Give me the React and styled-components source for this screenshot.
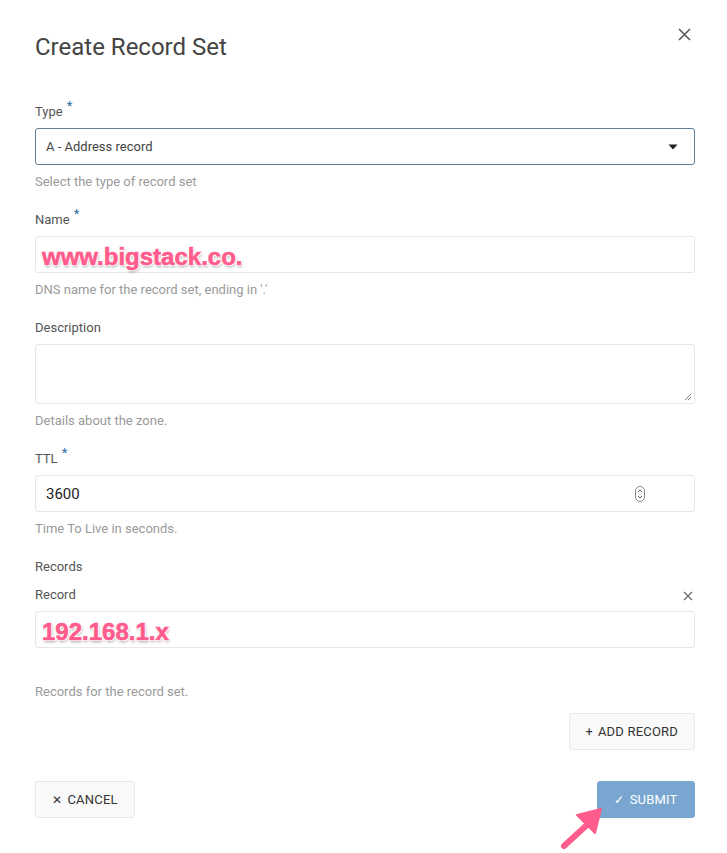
import styled, { createGlobalStyle } from "styled-components";

const Global = createGlobalStyle`
  html, body {
    margin: 0;
    background: #fff;
  }
  body {
    font-family: Roboto, "Liberation Sans", Arial, sans-serif;
    color: #444;
  }
`;

const Field = ({ label, required, help, children }) => (
  <FieldBox>
    <Label>
      {label}
      {required && <Star>*</Star>}
    </Label>
    {children}
    {help && <Help>{help}</Help>}
  </FieldBox>
);

const App = () => {
  return (
    <Dialog>
      <Global />
      <Header>
        <Title>Create Record Set</Title>
        <CloseBtn aria-label="close">
          <svg width="13" height="13" viewBox="0 0 13 13">
            <path d="M1 1L12 12M12 1L1 12" stroke="#555" strokeWidth="1.5" />
          </svg>
        </CloseBtn>
      </Header>

      <Field label="Type" required help="Select the type of record set">
        <Control $focused>
          <Value>A - Address record</Value>
          <svg width="10" height="6" viewBox="0 0 10 6">
            <path d="M0.5 0.5H9.5L5 5.5Z" fill="#222" />
          </svg>
        </Control>
      </Field>

      <Field label="Name" required help="DNS name for the record set, ending in '.'">
        <Control>
          <Annotated>www.bigstack.co.</Annotated>
        </Control>
      </Field>

      <Field label="Description" help="Details about the zone.">
        <Area>
          <svg width="8" height="8" viewBox="0 0 8 8">
            <path d="M7 1L1 7M7 4L4 7" stroke="#777" strokeWidth="0.9" />
          </svg>
        </Area>
      </Field>

      <Field label="TTL" required help="Time To Live in seconds.">
        <Control>
          <Number>3600</Number>
          <Spinner>
            <svg width="10" height="16" viewBox="0 0 10 16">
              <rect x="0.5" y="0.5" width="9" height="15" rx="4.5" fill="none" stroke="#888" />
              <path d="M3 6L5 4L7 6M3 10L5 12L7 10" fill="none" stroke="#555" strokeWidth="1" />
            </svg>
          </Spinner>
        </Control>
      </Field>

      <Section>Records</Section>
      <RecordHead>
        <Label>Record</Label>
        <svg width="10" height="10" viewBox="0 0 10 10">
          <path d="M1 1L9 9M9 1L1 9" stroke="#666" strokeWidth="1.2" />
        </svg>
      </RecordHead>
      <Control>
        <Annotated>192.168.1.x</Annotated>
      </Control>
      <Help $wide>Records for the record set.</Help>

      <AddRow>
        <Button>
          <span>+</span> ADD RECORD
        </Button>
      </AddRow>

      <Footer>
        <Button>
          <span>✕</span> CANCEL
        </Button>
        <Button $primary>
          <span>✓</span> SUBMIT
        </Button>
        <Arrow width="50" height="50" viewBox="0 0 50 50">
          <path d="M4 44L28 22" stroke="#ff5b8c" strokeWidth="6" strokeLinecap="round" />
          <path d="M17 13L41 7L35 31Z" fill="#ff5b8c" strokeLinejoin="round" stroke="#ff5b8c" strokeWidth="2" />
        </Arrow>
      </Footer>
    </Dialog>
  );
};

export default App;

const Dialog = styled.div`
  position: relative;
  width: 727px;
  height: 853px;
  box-sizing: border-box;
  padding: 33px 32px 0 35px;
`;

const Header = styled.div`
  display: flex;
  justify-content: space-between;
  align-items: flex-start;
  margin-bottom: 42px;
`;

const Title = styled.h2`
  margin: 0;
  font-size: 24px;
  line-height: 28px;
  font-weight: 400;
  color: #444;
`;

const CloseBtn = styled.button`
  border: none;
  background: none;
  padding: 0;
  margin: -5px 4px 0 0;
  cursor: pointer;
`;

const FieldBox = styled.div`
  display: flex;
  flex-direction: column;
  margin-bottom: 22px;
`;

const Label = styled.div`
  font-size: 13px;
  line-height: 16px;
  color: #555;
  margin-bottom: 9px;
  position: relative;
  top: 1px;
`;

const Star = styled.span`
  color: #2d6da3;
  font-size: 13px;
  position: relative;
  top: -6px;
  margin-left: 4px;
`;

const Help = styled.div`
  font-size: 13px;
  line-height: 16px;
  color: #9a9a9a;
  margin-top: ${(p) => (p.$wide ? "35px" : "8px")};
  position: relative;
  top: 1px;
`;

const Control = styled.div`
  height: 37px;
  box-sizing: border-box;
  display: flex;
  align-items: center;
  justify-content: space-between;
  padding: 0 16px 0 10px;
  border: 1px solid ${(p) => (p.$focused ? "#5f7f9b" : "#e6e6e6")};
  border-radius: 3px;
  background: #fff;
`;

const Value = styled.span`
  font-size: 13px;
  color: #444;
`;

const Number = styled.span`
  font-size: 15px;
  color: #222;
`;

const Spinner = styled.span`
  display: flex;
  margin-right: 33px;
`;

const Annotated = styled.span`
  font-family: "Liberation Sans", Arial, sans-serif;
  font-weight: 700;
  font-size: 24px;
  color: #ff5b8c;
  margin-left: -4px;
  margin-top: 4px;
  -webkit-text-stroke: 0.6px #ff5b8c;
  text-shadow: -1px -1px 0 #fff, 1px -1px 0 #fff, -1px 1px 0 #fff, 1px 1px 0 #fff,
    1px 2px 3px rgba(0, 0, 0, 0.35);
`;

const Area = styled.div`
  height: 60px;
  box-sizing: border-box;
  border: 1px solid #e6e6e6;
  border-radius: 3px;
  display: flex;
  align-items: flex-end;
  justify-content: flex-end;
  padding: 0 2px 2px 0;
`;

const Section = styled.div`
  font-size: 13px;
  line-height: 16px;
  color: #555;
  margin-bottom: 12px;
  position: relative;
  top: 1px;
`;

const RecordHead = styled.div`
  display: flex;
  justify-content: space-between;
  align-items: flex-start;
  padding-right: 2px;

  svg {
    margin-top: 5px;
  }
`;

const AddRow = styled.div`
  display: flex;
  justify-content: flex-end;
  margin-top: 14px;
`;

const Button = styled.button`
  height: 37px;
  box-sizing: border-box;
  padding: 0 16px;
  min-width: ${(p) => (p.$primary ? "98px" : "100px")};
  border-radius: 3px;
  border: 1px solid ${(p) => (p.$primary ? "#78a6d0" : "#e8e8e8")};
  background: ${(p) => (p.$primary ? "#78a6d0" : "#f9f9f9")};
  color: ${(p) => (p.$primary ? "#fff" : "#333")};
  font-family: Roboto, "Liberation Sans", Arial, sans-serif;
  font-size: 13px;
  letter-spacing: 0.2px;
  display: flex;
  align-items: center;
  justify-content: center;
  gap: 5px;
  cursor: pointer;

  span {
    font-size: 12px;
  }
`;

const Footer = styled.div`
  position: relative;
  display: flex;
  justify-content: space-between;
  margin-top: 31px;
`;

const Arrow = styled.svg`
  position: absolute;
  left: 525px;
  top: 21px;
`;
